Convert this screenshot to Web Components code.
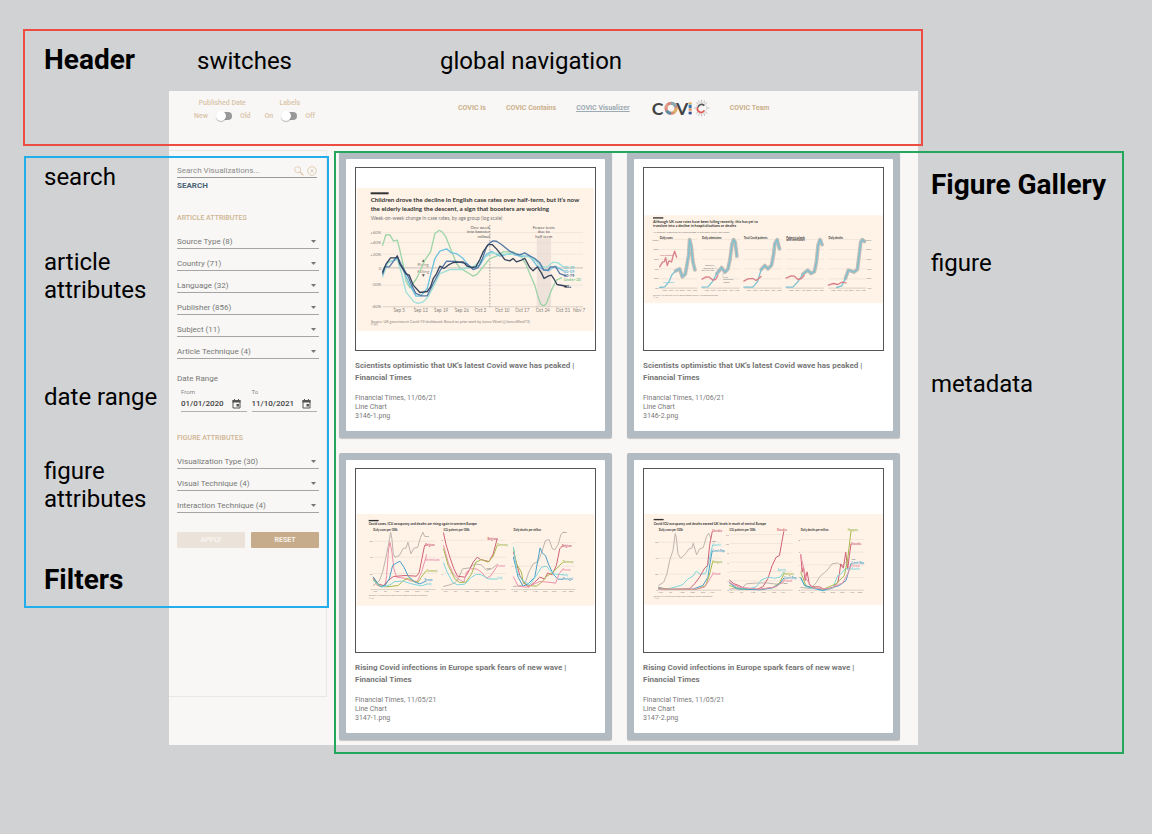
<!DOCTYPE html>
<html lang="en">
<head>
<meta charset="utf-8">
<meta name="viewport" content="width=device-width, initial-scale=1">
<title>COVIC Visualizer interface overview</title>
<style>
  html { background: #d1d2d4; }
  body { margin: 0; font-family: Roboto, "Liberation Sans", sans-serif; color: #000; }
</style>
</head>
<body>
<interface-overview></interface-overview>
<script>
function define(name, html, setup) {
  const template = document.createElement('template');
  template.innerHTML = html;
  customElements.define(name, class extends HTMLElement {
    connectedCallback() {
      if (this.shadowRoot) return;
      this.attachShadow({ mode: 'open' }).append(template.content.cloneNode(true));
      if (setup) setup(this, this.shadowRoot);
    }
  });
}

/* ---------- annotations ---------- */
define('note-label', `
<style>
  :host { display: block; font-size: 24px; line-height: 28px; }
  :host([strong]) { font-size: 28px; font-weight: 700; }
</style><slot></slot>`);

define('region-frame', `
<style>
  :host { display: block; position: absolute; box-sizing: border-box; border: 2px solid var(--frame); pointer-events: none; }
</style>`);

/* ---------- header ---------- */
define('toggle-switch', `
<style>
  :host { display: grid; justify-items: center; row-gap: 3px; color: #d9c4a9; font-size: 7px; line-height: 10px; font-weight: 500; }
  .row { display: flex; align-items: center; gap: 8px; }
  input { appearance: none; margin: 0; width: 16px; height: 8px; position: relative; }
  input::before { content: ""; position: absolute; inset: 0 0 0 3px; background: #999; border-radius: 4px; }
  input::after { content: ""; position: absolute; left: 0; top: -1px; width: 10px; height: 10px; border-radius: 50%; background: #fff; box-shadow: 0 1px 1px #0004; }
</style>
<label for="s"><slot></slot></label>
<div class="row"><span id="l"></span><input id="s" type="checkbox" role="switch"><span id="r"></span></div>`,
(host, root) => {
  root.getElementById('l').textContent = host.getAttribute('left');
  root.getElementById('r').textContent = host.getAttribute('right');
});

define('covic-logo', `
<style>:host { display: block; width: 60px; height: 24px; } svg { display: block; width: 100%; height: 100%; overflow: visible; }</style>
<svg viewBox="750 225 180 72" role="img" aria-label="COVIC" fill="none">
  <g font-family="Lato, sans-serif" font-size="53" font-weight="700" fill="#434343"><text x="755" y="281">C</text><text x="828" y="281">V</text></g>
  <g stroke-width="9">
    <circle cx="813" cy="262" r="15" stroke="#d8857a"/>
    <path d="M813 247a15 15 0 0 1 14 10" stroke="#86a9b4"/>
    <path d="M828 262a15 15 0 0 1-8 13" stroke="#ddb36f"/>
    <path d="M813 277a15 15 0 0 1-13-8" stroke="#5c8fa4"/>
    <path d="M798 262a15 15 0 0 1 5-11" stroke="#e0a28b"/>
  </g>
  <path d="M866 244h9v6h-9z" fill="#e4b04e"/><path d="M866 251h9v11h-9z" fill="#3876ad"/><path d="M866 263h9v6h-9z" fill="#e78a49"/><path d="M866 272h9v8h-9z" fill="#344f91"/>
  <g stroke="#b9b9b9" stroke-width="3"><path d="M905 236v8M905 278v8M882 261h7M920 261h8M889 244l5 6M921 244l-5 6M889 278l5-6M921 278l-5-6M896 239l2 6M914 239l-2 6M896 284l2-7M914 284l-2-7"/></g>
  <circle cx="904" cy="261" r="16" stroke="#ddd" stroke-width="3"/>
  <path d="M913 254a11 11 0 0 0-19 5" stroke="#555" stroke-width="5"/><path d="M893 259a11 11 0 0 0 20 9" stroke="#df5751" stroke-width="5"/>
</svg>`);

define('app-header', `
<style>
  :host { display: grid; grid-template-columns: 289px minmax(0, 1fr); height: 59px; box-sizing: border-box; padding-top: 5px; align-items: start; }
  .switches { display: flex; gap: 14px; padding: 2px 0 0 25px; }
  nav { display: flex; align-items: center; gap: 20px; font-size: 7px; line-height: 10px; font-weight: 700; }
  a { color: #cbb08b; text-decoration: none; white-space: nowrap; }
  a[aria-current] { color: #9caab3; text-decoration: underline; }
</style>
<div class="switches"><toggle-switch left="New" right="Old">Published Date</toggle-switch><toggle-switch left="On" right="Off">Labels</toggle-switch></div>
<nav><a href="#is">COVIC Is</a><a href="#contains">COVIC Contains</a><a href="#visualizer" aria-current="page">COVIC Visualizer</a><covic-logo></covic-logo><a href="#team">COVIC Team</a></nav>`);

/* ---------- filters ---------- */
define('filter-select', `
<style>
  :host { display: grid; grid-template-columns: 1fr; align-items: center; height: 22px; box-sizing: border-box; border-bottom: 1px solid #a5a5a5; padding-top: 8px; }
  select { grid-area: 1 / 1; appearance: none; border: 0; background: none; padding: 0; margin: 0; font: 8px/12px Roboto, sans-serif; color: #777; width: 100%; height: 12px; }
  svg { grid-area: 1 / 1; justify-self: end; width: 5px; height: 3px; margin-right: 3px; pointer-events: none; }
</style>
<select><option></option></select><svg viewBox="0 0 10 6"><path d="M0 0h10l-5 6z" fill="#757575"/></svg>`,
(host, root) => {
  const text = host.getAttribute('label');
  root.querySelector('option').textContent = text;
  root.querySelector('select').setAttribute('aria-label', text);
});

define('date-field', `
<style>
  :host { display: block; border-bottom: 1px solid #b0b0b0; }
  label { display: block; font-size: 6px; line-height: 8px; color: #888; }
  div { display: flex; align-items: center; justify-content: space-between; height: 15px; padding-right: 6px; }
  input { width: 44px; border: 0; padding: 0; background: none; font: 500 8px/14px Roboto, sans-serif; color: #444; }
  svg { width: 9px; height: 10px; }
</style>
<label for="d"></label>
<div><input id="d" type="text"><svg viewBox="0 0 18 20"><path d="M2 3h14v15H2z" fill="none" stroke="#555" stroke-width="2"/><path d="M1 2h16v5H1zM4 0h2v3H4zM12 0h2v3h-2zM9 10h5v5H9z" fill="#555"/></svg></div>`,
(host, root) => {
  root.querySelector('label').textContent = host.getAttribute('label');
  root.querySelector('input').setAttribute('value', host.getAttribute('value'));
});

define('filter-panel', `
<style>
  :host { display: block; align-self: stretch; box-sizing: border-box; border: 1px solid #e8e8e8; border-left: 0; padding: 13px 7px 0 8px; margin-bottom: 48px; color: #777; font-size: 8px; line-height: 10px; }
  button { font: 700 8px/10px Roboto, sans-serif; border: 0; padding: 0; background: none; }
  .search { display: flex; align-items: center; gap: 3px; height: 13px; border-bottom: 1px solid #999; margin-right: 2px; }
  .search input { flex: 1; min-width: 0; border: 0; padding: 0; background: none; font: 8px/12px Roboto, sans-serif; }
  .search input::placeholder { color: #8d8d8d; }
  .search button, .search svg { display: block; width: 10px; height: 10px; }
  .go { display: block; margin-top: 3px; color: #486475; }
  h3 { margin: 0; font-size: 7px; line-height: 10px; color: #cfb492; font-weight: 500; }
  .article { margin-top: 22px; margin-bottom: 4px; }
  .figure { margin-top: 21px; margin-bottom: 4px; }
  .range { margin-top: 15px; }
  .dates { display: grid; grid-template-columns: 1fr 1fr; gap: 5px; padding: 4px 2px 0 4px; }
  .actions { display: grid; grid-template-columns: 1fr 1fr; gap: 6px; margin-top: 19px; }
  .actions button { height: 16px; border-radius: 1px; background: #c7ac8b; color: #f7f0e8; font-size: 7px; }
  .actions button:disabled { background: #ebe2da; color: #f8f5f1; }
</style>
<div class="search"><input type="text" placeholder="Search Visualizations..." aria-label="Search Visualizations">
  <button aria-label="Find"><svg viewBox="0 0 30 30" fill="none" stroke="#dcc5a8" stroke-width="2.5"><circle cx="11" cy="11" r="9"/><path d="M18 18l10 10" stroke-width="4"/></svg></button>
  <button aria-label="Clear"><svg viewBox="0 0 30 30" fill="none" stroke="#dcc5a8" stroke-width="2.5"><circle cx="15" cy="15" r="13"/><path d="M10 10l10 10M20 10L10 20"/></svg></button></div>
<button class="go">SEARCH</button>
<h3 class="article">ARTICLE ATTRIBUTES</h3>
<filter-select label="Source Type (8)"></filter-select><filter-select label="Country (71)"></filter-select><filter-select label="Language (32)"></filter-select><filter-select label="Publisher (856)"></filter-select><filter-select label="Subject (11)"></filter-select><filter-select label="Article Technique (4)"></filter-select>
<div class="range">Date Range</div>
<div class="dates"><date-field label="From" value="01/01/2020"></date-field><date-field label="To" value="11/10/2021"></date-field></div>
<h3 class="figure">FIGURE ATTRIBUTES</h3>
<filter-select label="Visualization Type (30)"></filter-select><filter-select label="Visual Technique (4)"></filter-select><filter-select label="Interaction Technique (4)"></filter-select>
<div class="actions"><button disabled>APPLY</button><button>RESET</button></div>`);

/* ---------- charts ---------- */
const C = { red: '#cf6073', olive: '#a5b94c', pink: '#eb91ad', blue: '#4a9fc8', cyan: '#7dd5dc', grey: '#bdb4ac', ink: '#333', soft: '#8b837c' };
const T = (x, y, size, text, fill = C.soft, anchor = 'start', weight = 400) =>
  `<text x="${x}" y="${y}" font-size="${size}" fill="${fill}" text-anchor="${anchor}" font-weight="${weight}">${text}</text>`;
const L = (points, stroke, width = 3, extra = '') =>
  `<polyline points="${points}" fill="none" stroke="${stroke}" stroke-width="${width}" stroke-linejoin="round" stroke-linecap="round" ${extra}/>`;
const R = (x, y, w, h, fill) => `<rect x="${x}" y="${y}" width="${w}" height="${h}" fill="${fill}"/>`;
const grid = (x1, x2, ys) => ys.map(y => `<path d="M${x1} ${y}H${x2}" stroke="#ecdfd4" stroke-width="2"/>`).join('');
const axis = (x1, x2, y) => `<path d="M${x1} ${y}H${x2}" stroke="#c9beb4" stroke-width="2"/>`;
const months = (xs, y, names) => xs.map((x, i) => T(x, y, 8, names[i], C.soft, 'middle')).join('');

const charts = {
  boosters: () => ['48 53 718 548',
    R(50, 113, 712, 430, '#fff3e8') + R(92, 126, 54, 6, '#333') +
    T(92, 156, 19, 'Children drove the decline in English case rates over half-term, but it’s now', C.ink, 'start', 700) +
    T(92, 182, 19, 'the elderly leading the descent, a sign that boosters are working', C.ink, 'start', 700) +
    T(92, 208, 15, 'Week-on-week change in case rates, by age group (log scale)', '#777') +
    R(591, 264, 43, 206, '#efe2da') + grid(128, 730, [247, 277, 312, 405]) + axis(128, 730, 470) + R(128, 351, 602, 4, '#d5ccc4') +
    [['+60%', 247], ['+40%', 277], ['+20%', 312], ['0', 354], ['-20%', 405], ['-40%', 470]].map(a => T(124, a[1] + 4, 13, a[0], C.soft, 'end')).join('') +
    [['Sep 5', 178], ['Sep 12', 243], ['Sep 19', 304], ['Sep 26', 366], ['Oct 3', 422], ['Oct 10', 488], ['Oct 17', 548], ['Oct 24', 609], ['Oct 31', 670], ['Nov 7', 718]].map((a, i) => T(a[1], 487, 14, a[0], C.soft, 'middle') + `<path d="M${163 + i * 61} 470v6" stroke="#bbb" stroke-width="2"/>`).join('') +
    `<path d="M450 224V470" stroke="#777" stroke-width="2" stroke-dasharray="5 4"/>` +
    T(450, 236, 13, 'One week', '#555', 'end') + T(450, 249, 13, 'into booster', '#555', 'end') + T(450, 262, 13, 'rollout', '#555', 'end') +
    T(612, 236, 13, 'Fewer tests', '#555', 'middle') + T(612, 249, 13, 'due to', '#555', 'middle') + T(612, 262, 13, 'half term', '#555', 'middle') +
    T(250, 335, 14, '▲', '#555', 'middle') + T(250, 347, 13, 'Rising', C.soft, 'middle') + T(250, 368, 13, 'Falling', C.soft, 'middle') + T(250, 380, 14, '▼', '#555', 'middle') +
    L('128,285 138,253 150,254 160,272 172,270 178,292 190,345 198,392 210,413 230,385 255,330 272,305 285,250 298,240 306,244 318,260 330,290 350,340 362,355 375,362 388,370 400,378 412,372 420,362 450,325 470,318 490,305 520,305 545,320 560,345 572,375 585,405 595,440 603,462 612,467 620,460 635,420 650,390 665,383', '#9dd4a8', 4) +
    L('128,362 142,338 172,325 190,360 210,405 228,438 242,438 262,415 272,375 285,325 300,303 320,296 335,308 350,310 370,325 385,345 400,353 420,345 440,312 455,303 480,318 510,310 540,318 570,318 590,345 605,355 625,362 645,348 672,362', '#6ec1df', 4) +
    L('128,380 145,335 172,328 185,370 198,425 210,440 222,455 235,460 250,455 265,440 280,410 300,370 330,358 360,358 400,350 430,325 455,308 490,312 540,312 580,325 605,348 620,352 640,336 655,338 672,350', '#9edfd8', 4) +
    L('128,372 135,350 148,350 172,318 185,345 205,380 215,405 228,430 245,437 262,437 280,400 300,362 320,333 350,334 380,340 400,358 415,352 428,325 440,290 450,278 460,272 470,273 485,283 510,303 525,310 540,314 555,308 570,317 585,325 600,338 612,360 625,360 632,350 648,350 660,370 678,376', '#5379a7', 4) +
    L('128,366 138,342 152,323 168,323 172,317 180,342 198,371 208,375 220,405 240,427 262,424 272,410 280,385 290,370 300,348 312,355 325,345 340,337 370,335 382,348 395,352 408,350 420,328 430,305 445,283 457,283 470,296 485,315 495,328 510,332 520,325 530,335 545,330 555,324 570,352 580,362 593,350 605,368 613,385 625,378 635,375 642,385 652,403 668,406 680,409', '#34435a', 4) +
    T(672, 356, 12, '20-39', '#70c8ca', 'start', 700) + T(672, 367, 12, '40-59', '#5fbadc', 'start', 700) + T(672, 380, 12, '60-79', '#466f9f', 'start', 700) + T(672, 392, 12, 'Under-20', '#86c995', 'start', 700) + T(674, 413, 12, '80+', '#29384f', 'start', 700) +
    T(92, 518, 11, 'Source: UK government Covid-19 dashboard. Based on prior work by James Ward (@JamesWard73)', C.soft) + T(92, 529, 10, '© FT')],

  decline: () => {
    const xs = [90, 217, 343, 470, 597];
    const blues = [
      '90,412 105,410 118,395 126,375 138,362 150,356 158,380 167,372 172,345 177,315 180,268 185,288 190,335 196,359',
      '217,411 235,410 248,395 262,370 276,352 286,366 295,357 301,330 307,284 312,268 317,276 322,318',
      '343,411 370,411 384,395 395,358 406,346 415,356 426,345 432,315 436,280 443,268 450,296',
      '470,411 490,411 505,395 520,372 535,360 545,370 555,364 561,335 566,285 572,268 578,283',
      '622,412 637,407 648,385 657,360 665,362 673,366 684,358 690,310 694,276 699,268 705,274'];
    const greys = ['138,362 150,356 158,380 167,372 172,345 177,315 180,268 185,288 190,335 196,359', '262,370 276,352 286,366 295,357 301,330 307,284 312,268 317,276 322,318', '395,358 406,346 415,356 426,345 432,315 436,280 443,268 450,296', '520,372 535,360 545,370 555,364 561,335 566,285 572,268 578,283', '648,385 657,360 665,362 673,366 684,358 690,310 694,276 699,268 705,274'];
    const reds = ['90,350 99,335 104,335 108,322 113,346 118,332 126,335 130,318 135,303 141,321', '217,387 230,380 240,381 250,390 258,388 265,376', '343,393 355,386 370,385 380,391 395,379', '470,384 485,377 495,378 505,388 516,385 524,376', '597,405 612,400 625,403 638,396 650,398'];
    return ['43 53 718 548',
      R(44, 195, 716, 264, '#fff3e8') + R(70, 201, 31, 4, '#333') +
      T(70, 217, 11, 'Although UK case rates have been falling recently, this has yet to', C.ink, 'start', 700) +
      T(70, 231, 11, 'translate into a decline in hospitalisations or deaths', C.ink, 'start', 700) +
      T(70, 247, 8, 'All metrics, displayed as a percentage of the peak value last winter', '#777') +
      xs.map((x, i) => grid(x, x + 114, [268, 298, 327, 356, 386]) + axis(x, x + 114, 414) +
        L(greys[i], '#c2bcb5', 11) + L(blues[i], '#7cc2d3', 4) + L(reds[i], '#d98189', 4) +
        months([x + 15, x + 33, x + 51, x + 69, x + 88, x + 106], 424, ['Sep', 'Oct', 'Nov', 'Dec', 'Jan', 'Feb'])).join('') +
      ['Daily cases', 'Daily admissions', 'Total Covid patients', 'Patients in beds', 'Daily deaths'].map((t, i) => T(xs[i], 266, 8, t, C.ink, 'start', 700)).join('') + T(470, 273, 8, 'with ventilators', C.ink, 'start', 700) +
      [100, 80, 60, 40, 20, 0].map((n, i) => T(88, 271 + i * 29, 8, n + '%', C.soft, 'end') + T(727, 271 + i * 29, 8, n + '%', C.soft, 'end')).join('') +
      T(91, 316, 7, 'This autumn', '#d4737d', 'start', 700) + T(100, 399, 7, 'Last winter', '#67bed5', 'start', 700) +
      T(254, 348, 7, 'Boosters', '#777', 'end') + T(254, 355, 7, 'started for', '#777', 'end') + T(254, 362, 7, 'the over 50s', '#777', 'end') + T(281, 384, 7, 'First', '#777') + T(281, 391, 7, 'lockdown', '#777') + T(281, 398, 7, 'ended', '#777') +
      `<path d="M256 350l12 14M280 382v-14" stroke="#999" fill="none"/>` +
      T(70, 437, 7, 'Source: FT analysis of UK government Covid-19 dashboard data') + T(70, 444, 7, '© FT')];
  },

  western: () => ['48 60 718 548',
    R(50, 195, 714, 276, '#fff3e8') + R(86, 213, 30, 4, '#333') +
    T(86, 229, 10, 'Covid cases, ICU occupancy and deaths are rising again in western Europe', C.ink, 'start', 700) +
    T(100, 247, 8, 'Daily cases per 100k', C.ink, 'start', 700) + T(311, 247, 8, 'ICU patients per 100k', C.ink, 'start', 700) + T(521, 247, 8, 'Daily deaths per million', C.ink, 'start', 700) +
    grid(100, 287, [277, 325, 374]) + axis(100, 287, 422) + grid(311, 498, [274, 325, 374]) + axis(311, 498, 422) + grid(521, 707, [281, 352]) + axis(521, 707, 422) +
    [['60', 280], ['40', 328], ['20', 377], ['0', 425]].map(a => T(98, a[1], 8, a[0], C.soft, 'end')).join('') + [['3', 277], ['2', 328], ['1', 377], ['0', 425]].map(a => T(309, a[1], 8, a[0], C.soft, 'end')).join('') + [['4', 284], ['2', 355], ['0', 425]].map(a => T(519, a[1], 8, a[0], C.soft, 'end')).join('') +
    months([106, 137, 170, 201, 232, 260], 431, ['Jun', 'Jul', 'Aug', 'Sep', 'Oct', 'Nov']) + months([317, 347, 380, 411, 441, 468], 431, ['Jun', 'Jul', 'Aug', 'Sep', 'Oct', 'Nov']) + months([527, 556, 586, 616, 643, 673, 695], 431, ['Jun', 'Jul', 'Aug', 'Sep', 'Oct', 'Nov', 'Dec']) +
    L('100,410 118,396 128,370 138,325 147,280 152,250 156,270 160,315 165,325 178,320 190,298 198,298 204,280 213,315 222,298 233,296 242,265 249,250 254,262', C.grey) +
    L('100,388 112,410 135,414 140,380 146,300 150,280 156,310 162,360 170,385 195,388 212,396 232,398 245,370 260,318', C.pink) +
    L('100,385 112,405 130,410 145,395 160,383 195,380 230,382 238,370 246,330 254,290 258,289', C.red) +
    L('100,390 115,410 140,414 175,410 190,395 205,388 220,397 235,400 246,382 258,367', C.olive) +
    L('100,385 120,413 135,410 148,390 158,350 170,342 180,337 192,355 205,382 225,400 240,405 258,397', C.blue) +
    L('100,395 125,415 150,408 165,398 190,397 215,405 245,411 260,406', C.cyan) +
    T(256, 264, 8, 'UK', C.ink) + T(256, 292, 8, 'Belgium', C.red, 'start', 700) + T(256, 336, 8, 'Netherlands', C.pink, 'start', 700) + T(260, 369, 8, 'Germany', C.olive, 'start', 700) + T(254, 398, 8, 'France', C.blue, 'start', 700) + T(259, 408, 8, 'Italy', C.cyan, 'start', 700) +
    L('311,413 330,408 345,402 355,390 368,360 390,357 405,345 425,348 440,364 455,360 472,347', C.grey) +
    L('311,252 318,285 330,325 342,360 353,382 376,385 385,370 400,340 412,325 422,332 448,338 460,315 472,270', C.red) +
    L('311,290 325,340 340,375 355,390 372,400 380,370 392,360 410,360 425,370 440,388 452,382 472,352', C.pink) +
    L('311,300 325,350 345,390 360,401 378,400 395,375 408,340 425,332 445,340 460,322 472,290', C.olive) +
    L('311,342 322,370 338,400 352,408 375,406 395,385 410,376 425,378 445,390 472,391', C.cyan) +
    T(472, 272, 8, 'Belgium', C.red, 'end', 700) + T(472, 292, 8, 'Germany', C.olive, 'start', 700) + T(472, 353, 8, 'France', C.pink, 'start', 700) + T(441, 360, 8, 'UK', C.ink) + T(472, 392, 8, 'Italy', C.cyan, 'start', 700) +
    L('521,413 545,410 558,398 567,370 580,345 595,338 606,310 617,275 628,272 638,300 646,302 656,285 663,258 671,249', C.grey) +
    L('521,310 532,350 540,380 555,405 566,415 585,400 600,385 615,390 624,372 637,378 650,350 660,300 668,291', C.red) +
    L('521,298 530,345 545,370 550,400 565,410 590,412 606,400 620,383 637,372 650,360 668,341', C.olive) +
    L('521,325 535,385 550,412 565,405 585,385 596,325 601,297 608,313 617,320 628,350 642,378 655,391 670,391', C.blue) +
    L('521,295 532,370 548,395 570,408 590,380 605,355 620,352 640,375 670,378', C.cyan) +
    L('521,384 535,412 560,415 585,405 600,398 625,400 648,403 658,375 668,362', C.pink) +
    T(671, 252, 8, 'UK', C.ink) + T(667, 294, 8, 'Belgium', C.red, 'start', 700) + T(669, 343, 8, 'Germany', C.olive, 'start', 700) + T(669, 365, 8, 'France', C.pink, 'start', 700) + T(669, 380, 8, 'Italy', C.cyan, 'start', 700) + T(669, 393, 8, 'Portugal', C.blue, 'start', 700) +
    T(86, 443, 7, 'Source: FT analysis of data from national health ministries') + T(86, 450, 7, '© FT')],

  central: () => ['43 60 718 548',
    R(44, 195, 716, 273, '#fff3e8') + R(72, 210, 30, 4, '#333') +
    T(72, 227, 10, 'Covid ICU occupancy and deaths exceed UK levels in much of central Europe', C.ink, 'start', 700) +
    T(87, 245, 8, 'Daily cases per 100k', C.ink, 'start', 700) + T(300, 245, 8, 'ICU patients per 100k', C.ink, 'start', 700) + T(514, 245, 8, 'Daily deaths per million', C.ink, 'start', 700) +
    grid(87, 276, [280, 328, 376]) + axis(87, 276, 424) + grid(300, 489, [257, 284, 312, 340, 368, 396]) + axis(300, 489, 424) + grid(514, 703, [272, 310, 348, 386]) + axis(514, 703, 424) +
    [['60', 283], ['40', 331], ['20', 379], ['0', 427]].map(a => T(85, a[1], 8, a[0], C.soft, 'end')).join('') + ['12', '10', '8', '6', '4', '2', '0'].map((t, i) => T(298, 260 + i * 28, 8, t, C.soft, 'end')).join('') + ['8', '6', '4', '2', '0'].map((t, i) => T(512, 275 + i * 38, 8, t, C.soft, 'end')).join('') +
    months([93, 123, 157, 189, 220, 247], 433, ['Jun', 'Jul', 'Aug', 'Sep', 'Oct', 'Nov']) + months([306, 336, 370, 402, 433, 460], 433, ['Jun', 'Jul', 'Aug', 'Sep', 'Oct', 'Nov']) + months([520, 548, 580, 610, 638, 668, 692], 433, ['Jun', 'Jul', 'Aug', 'Sep', 'Oct', 'Nov', 'Dec']) +
    L('87,410 102,400 112,375 120,335 130,305 137,254 140,265 145,315 153,328 165,318 178,300 187,297 191,283 201,318 210,300 221,296 231,262 237,253 244,268', C.grey) +
    L('87,415 110,421 140,414 160,407 175,390 190,382 200,367 212,376 228,374 237,340 249,289', C.cyan) +
    L('87,417 120,422 180,420 195,405 210,385 225,358 234,350 240,290 248,248', C.red) +
    L('87,419 120,422 190,421 220,410 235,385 241,345 248,306', C.blue) + L('87,420 200,422 228,410 239,380 249,340', C.olive) + L('87,421 200,421 225,415 238,395 249,377', C.pink) +
    T(248, 250, 8, 'Slovakia', C.red, 'start', 700) + T(248, 278, 8, 'UK', C.ink) + T(248, 291, 8, 'Austria', C.cyan, 'start', 700) + T(248, 308, 8, 'Czech Rep.', C.blue, 'start', 700) + T(248, 342, 8, 'Hungary', C.olive, 'start', 700) + T(248, 378, 8, 'Poland', C.pink, 'start', 700) +
    L('300,421 340,415 350,405 375,403 410,402 440,406 463,402', C.grey) +
    L('300,394 312,404 330,411 345,420 380,422 400,414 415,390 428,350 440,325 450,320 457,280 463,248', C.red) +
    L('300,404 325,417 355,421 380,414 396,393 415,385 435,388 452,385 463,369', C.cyan) +
    L('300,410 330,421 390,422 430,416 450,403 463,376', C.olive) + L('300,400 320,420 390,423 430,417 450,405 463,388', C.blue) + L('300,402 330,415 390,421 440,414 463,396', C.pink) +
    T(472, 245, 8, 'Slovakia', C.red, 'end', 700) + T(444, 367, 8, 'Austria', C.cyan, 'start', 700) + T(463, 378, 8, 'Hungary', C.olive, 'start', 700) + T(463, 391, 8, 'Czech Rep.', C.blue, 'start', 700) + T(463, 399, 8, 'Poland', C.pink, 'start', 700) + T(463, 405, 8, 'UK', C.ink) +
    L('514,416 545,419 560,402 572,382 592,366 608,345 625,342 637,352 658,332', C.grey) +
    L('514,317 518,370 522,353 527,395 533,369 540,408 550,414 570,414 585,422 610,416 625,402 630,375 634,345 642,358 649,310 655,361 660,320 665,285', C.red) +
    L('514,390 530,414 580,426 610,418 625,380 635,375 647,360 665,360', C.cyan) +
    L('514,370 530,412 580,422 620,405 645,380 655,330 665,246', C.olive) + L('514,386 525,410 580,425 630,410 650,395 665,344', C.blue) + L('514,320 530,390 550,418 600,420 640,402 655,375 665,350', C.pink) +
    T(655, 246, 8, 'Hungary', C.olive, 'start', 700) + T(666, 287, 8, 'Slovakia', C.red, 'start', 700) + T(667, 332, 8, 'UK', C.ink) + T(666, 346, 8, 'Czech Rep.', C.blue, 'start', 700) + T(666, 354, 8, 'Poland', C.pink, 'start', 700) + T(666, 363, 8, 'Austria', C.cyan, 'start', 700) +
    T(72, 444, 7, 'Source: FT analysis of data from national health ministries') + T(72, 451, 7, '© FT')]
};

define('line-chart', `<style>:host { display: block; } svg { display: block; width: 100%; height: auto; font-family: Lato, sans-serif; }</style>`,
(host, root) => {
  const [box, body] = charts[host.getAttribute('name')]();
  root.innerHTML += `<svg viewBox="${box}">${body}</svg>`;
});

/* ---------- gallery ---------- */
define('figure-card', `
<style>
  :host { display: block; background: #b2bbc1; border-radius: 2px; padding: 7px; box-shadow: 0 1px 1px #0003; }
  article { background: #fff; border-radius: 1px; padding: 8px 9px 10px; color: #777; }
  .frame { border: 1px solid #555; }
  h2 { margin: 9px 0 10px; font-size: 8px; line-height: 12px; font-weight: 700; }
  p { margin: 0; font-size: 7px; line-height: 9px; }
</style>
<article><div class="frame"></div><h2><slot></slot></h2><p id="src"></p><p>Line Chart</p><p id="file"></p></article>`,
(host, root) => {
  const chart = document.createElement('line-chart');
  chart.setAttribute('name', host.getAttribute('chart'));
  root.querySelector('.frame').append(chart);
  root.getElementById('src').textContent = host.getAttribute('source');
  root.getElementById('file').textContent = host.getAttribute('file');
});

define('figure-gallery', `
<style>:host { display: grid; grid-template-columns: 1fr 1fr; gap: 15px; padding: 2px 18px 5px 12px; align-content: start; }</style>
<figure-card chart="boosters" source="Financial Times, 11/06/21" file="3146-1.png">Scientists optimistic that UK's latest Covid wave has peaked | Financial Times</figure-card>
<figure-card chart="decline" source="Financial Times, 11/06/21" file="3146-2.png">Scientists optimistic that UK's latest Covid wave has peaked | Financial Times</figure-card>
<figure-card chart="western" source="Financial Times, 11/05/21" file="3147-1.png">Rising Covid infections in Europe spark fears of new wave | Financial Times</figure-card>
<figure-card chart="central" source="Financial Times, 11/05/21" file="3147-2.png">Rising Covid infections in Europe spark fears of new wave | Financial Times</figure-card>`);

define('covic-app', `
<style>
  :host { display: block; background: #f8f7f5; }
  main { display: grid; grid-template-columns: 158px minmax(0, 1fr); }
</style>
<app-header></app-header><main><filter-panel></filter-panel><figure-gallery></figure-gallery></main>`);

/* ---------- page ---------- */
define('interface-overview', `
<style>
  :host { display: grid; position: relative; grid-template-columns: 169px minmax(0, 1fr) 234px; grid-template-rows: 91px auto; align-items: start; padding-bottom: 88px; }
  .left { grid-area: 1 / 1 / 3 / 2; display: grid; grid-template-rows: 117px 85px 135px 74px 109px auto; padding: 46px 0 0 44px; }
  .left note-label { width: 114px; }
  .top { grid-area: 1 / 2; display: grid; grid-template-columns: 243px auto; padding: 47px 0 0 28px; }
  .right { grid-area: 1 / 3 / 3 / 4; display: grid; grid-template-rows: 78px 121px auto; padding: 171px 0 0 13px; }
  covic-app { grid-area: 2 / 2; }
  .header { --frame: #ec4c41; left: 23px; right: 229px; top: 29px; height: 117px; }
  .filters { --frame: #22aeea; left: 24px; width: 305px; top: 156px; height: 452px; }
  .gallery { --frame: #23a75d; left: 334px; right: 28px; top: 151px; bottom: 79px; }
</style>
<div class="left"><note-label strong>Header</note-label><note-label>search</note-label><note-label>article attributes</note-label><note-label>date range</note-label><note-label>figure attributes</note-label><note-label strong>Filters</note-label></div>
<div class="top"><note-label>switches</note-label><note-label>global navigation</note-label></div>
<covic-app></covic-app>
<div class="right"><note-label strong>Figure Gallery</note-label><note-label>figure</note-label><note-label>metadata</note-label></div>
<region-frame class="header"></region-frame><region-frame class="filters"></region-frame><region-frame class="gallery"></region-frame>`);
</script>
</body>
</html>
